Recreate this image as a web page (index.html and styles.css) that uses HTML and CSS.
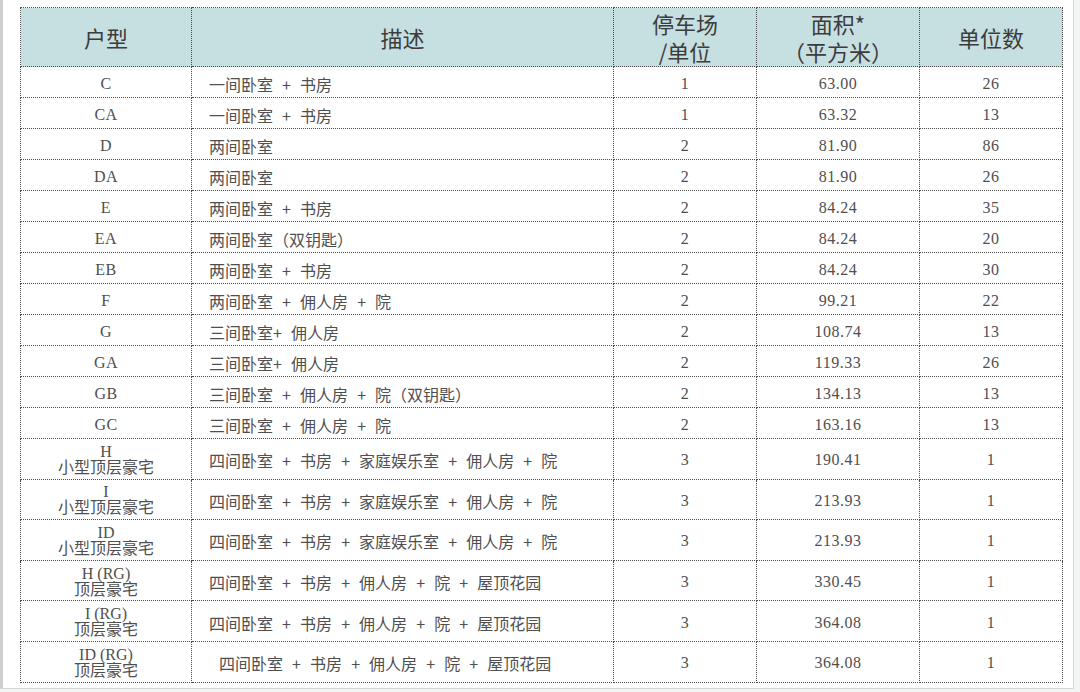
FILE: index.html
```html
<!DOCTYPE html>
<html lang="zh-CN">
<head>
<meta charset="utf-8">
<title>户型表</title>
<link rel="stylesheet" href="styles.css">
</head>
<body>
<div class="frame">
  <table class="units">
    <colgroup>
      <col class="c1"><col class="c2"><col class="c3"><col class="c4"><col class="c5">
    </colgroup>
    <thead>
      <tr>
        <th>户型</th>
        <th>描述</th>
        <th><span class="hl">停车场</span><span class="hl">/单位</span></th>
        <th><span class="hl">面积*</span><span class="hl">（平方米）</span></th>
        <th>单位数</th>
      </tr>
    </thead>
    <tbody>
      <tr><td>C</td><td class="desc">一间卧室 + 书房</td><td>1</td><td>63.00</td><td>26</td></tr>
      <tr><td>CA</td><td class="desc">一间卧室 + 书房</td><td>1</td><td>63.32</td><td>13</td></tr>
      <tr><td>D</td><td class="desc">两间卧室</td><td>2</td><td>81.90</td><td>86</td></tr>
      <tr><td>DA</td><td class="desc">两间卧室</td><td>2</td><td>81.90</td><td>26</td></tr>
      <tr><td>E</td><td class="desc">两间卧室 + 书房</td><td>2</td><td>84.24</td><td>35</td></tr>
      <tr><td>EA</td><td class="desc">两间卧室（双钥匙）</td><td>2</td><td>84.24</td><td>20</td></tr>
      <tr><td>EB</td><td class="desc">两间卧室 + 书房</td><td>2</td><td>84.24</td><td>30</td></tr>
      <tr><td>F</td><td class="desc">两间卧室 + 佣人房 + 院</td><td>2</td><td>99.21</td><td>22</td></tr>
      <tr><td>G</td><td class="desc">三间卧室+ 佣人房</td><td>2</td><td>108.74</td><td>13</td></tr>
      <tr><td>GA</td><td class="desc">三间卧室+ 佣人房</td><td>2</td><td>119.33</td><td>26</td></tr>
      <tr><td>GB</td><td class="desc">三间卧室 + 佣人房 + 院（双钥匙）</td><td>2</td><td>134.13</td><td>13</td></tr>
      <tr><td>GC</td><td class="desc">三间卧室 + 佣人房 + 院</td><td>2</td><td>163.16</td><td>13</td></tr>
      <tr class="tall"><td class="two">H<br>小型顶层豪宅</td><td class="desc">四间卧室 + 书房 + 家庭娱乐室 + 佣人房 + 院</td><td>3</td><td>190.41</td><td>1</td></tr>
      <tr class="tall"><td class="two">I<br>小型顶层豪宅</td><td class="desc">四间卧室 + 书房 + 家庭娱乐室 + 佣人房 + 院</td><td>3</td><td>213.93</td><td>1</td></tr>
      <tr class="tall"><td class="two">ID<br>小型顶层豪宅</td><td class="desc">四间卧室 + 书房 + 家庭娱乐室 + 佣人房 + 院</td><td>3</td><td>213.93</td><td>1</td></tr>
      <tr class="tall"><td class="two">H (RG)<br>顶层豪宅</td><td class="desc">四间卧室 + 书房 + 佣人房 + 院 + 屋顶花园</td><td>3</td><td>330.45</td><td>1</td></tr>
      <tr class="tall"><td class="two">I (RG)<br>顶层豪宅</td><td class="desc">四间卧室 + 书房 + 佣人房 + 院 + 屋顶花园</td><td>3</td><td>364.08</td><td>1</td></tr>
      <tr class="tall"><td class="two">ID (RG)<br>顶层豪宅</td><td class="desc indent">四间卧室 + 书房 + 佣人房 + 院 + 屋顶花园</td><td>3</td><td>364.08</td><td>1</td></tr>
    </tbody>
  </table>
</div>
</body>
</html>
```

FILE: styles.css
```css
html, body {
  margin: 0;
  padding: 0;
}
body {
  background: #f3f4f4;
  width: 1080px;
  height: 692px;
  overflow: hidden;
}
.frame {
  box-sizing: border-box;
  width: 1074px;
  height: 689px;
  background: #ffffff;
  border-left: 3px solid #cfcfcf;
  border-right: 1px solid #d6d6d6;
  border-bottom: 1px solid #d6d6d6;
  padding: 7px 0 0 17px;
}
.units {
  border-collapse: collapse;
  table-layout: fixed;
  width: 1042px;
}
.c1 { width: 171px; }
.c2 { width: 422px; }
.c3 { width: 143px; }
.c4 { width: 163px; }
.c5 { width: 143px; }

.units th,
.units td {
  border: 1px dotted #4a4a4a;
  padding: 0;
  text-align: center;
  vertical-align: middle;
}
.units thead tr {
  height: 59px;
}
.units tbody tr {
  height: 31px;
}
.units tbody tr.tall {
  height: 40.6px;
}
.units th {
  background: #c6dfe0;
  font-family: "Noto Sans CJK SC", "Noto Sans", sans-serif;
  font-weight: 400;
  font-size: 22px;
  line-height: 28px;
  color: #3c3c3c;
}
.units th .hl {
  display: block;
  height: 28px;
  line-height: 28px;
}
.units td {
  font-family: "Liberation Serif", "Noto Sans CJK SC", serif;
  font-size: 16px;
  line-height: 16px;
  letter-spacing: 0.5px;
  color: #4f4f4f;
  padding-top: 3px;
}
.units td.two {
  line-height: 16px;
  padding-top: 2px;
  letter-spacing: 0;
}
.units td.desc {
  text-align: left;
  padding-left: 17px;
  font-family: "Noto Sans CJK SC", "Liberation Serif", sans-serif;
  font-size: 16px;
  letter-spacing: 0;
  word-spacing: 5.5px;
}
.units td.indent {
  padding-left: 27px;
}
```
